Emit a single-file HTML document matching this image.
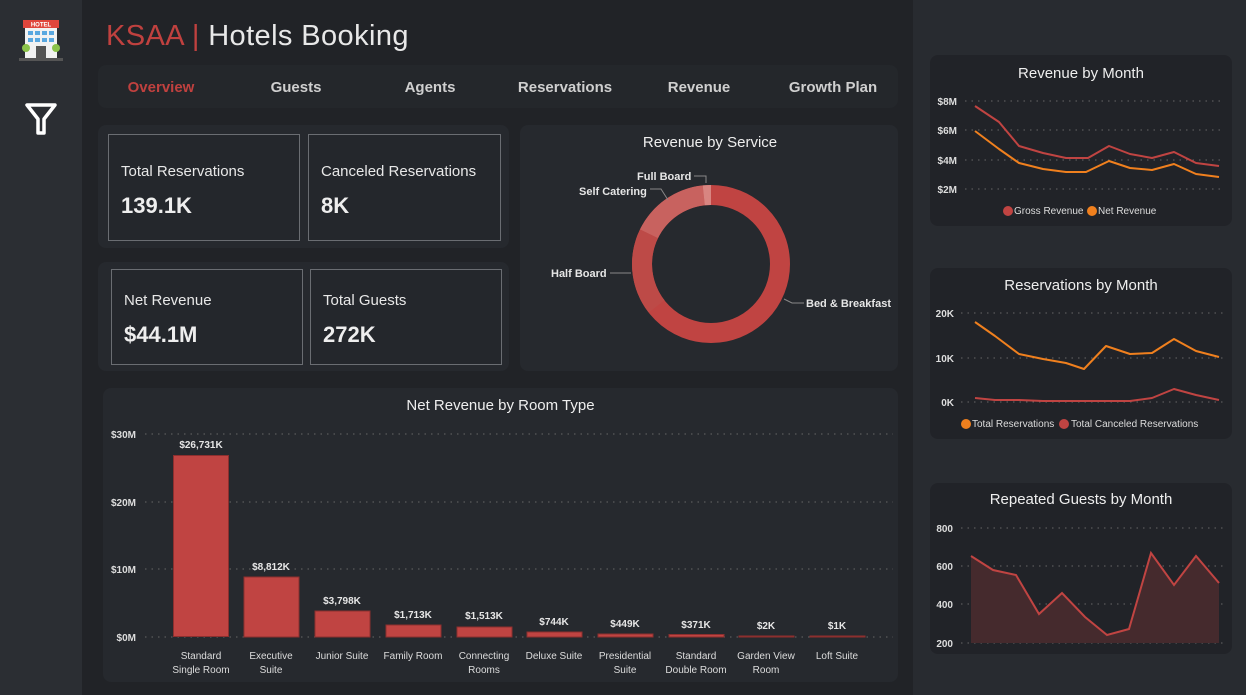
<!DOCTYPE html>
<html><head><meta charset="utf-8"><style>
*{margin:0;padding:0;box-sizing:border-box}
body{width:1246px;height:695px;background:#282b30;font-family:"Liberation Sans","DejaVu Sans",sans-serif;position:relative;overflow:hidden;color:#e6e6e6}
.a{position:absolute}
.card{position:absolute;background:#26292e;border-radius:8px}
.kpi{position:absolute;border:1px solid #6a6d72;background:#24272c}
.kpi .l{position:absolute;left:12px;top:28px;font-size:15px;color:#e8e8e8}
.kpi .v{position:absolute;left:12px;top:58px;font-size:22px;font-weight:bold;color:#eee}
.nav{position:absolute;top:79px;font-size:15px;font-weight:bold;color:#cfcfcf;transform:translateX(-50%)}
.t{position:absolute;font-size:15px;color:#eee;text-align:center}
svg text{font-family:"Liberation Sans",sans-serif}
</style></head><body>
<div class="a" style="left:0;top:0;width:82px;height:695px;background:#2b2e33"></div>
<div class="a" style="left:82px;top:0;width:831px;height:695px;background:#212327"></div>
<svg class="a" style="left:18px;top:18px" width="46" height="46" viewBox="0 0 46 46">
<rect x="5" y="2" width="36" height="8" fill="#e0463c"/><text x="23" y="8.5" font-size="6" fill="#fff" text-anchor="middle" font-weight="bold">HOTEL</text>
<rect x="7" y="10" width="32" height="30" fill="#f2f2f2"/>
<g fill="#5aa8e0"><rect x="10" y="13" width="5" height="4"/><rect x="17" y="13" width="5" height="4"/><rect x="24" y="13" width="5" height="4"/><rect x="31" y="13" width="5" height="4"/><rect x="10" y="20" width="5" height="4"/><rect x="17" y="20" width="5" height="4"/><rect x="24" y="20" width="5" height="4"/><rect x="31" y="20" width="5" height="4"/></g>
<rect x="18" y="28" width="10" height="12" fill="#555"/>
<circle cx="8" cy="30" r="4" fill="#8bc34a"/><circle cx="38" cy="30" r="4" fill="#8bc34a"/>
<rect x="1" y="40" width="44" height="3" fill="#555"/></svg>
<svg class="a" style="left:24px;top:102px" width="34" height="34" viewBox="0 0 34 34"><path d="M3 3 H31 L20 17 V31 H14 V17 Z" fill="none" stroke="#fff" stroke-width="3.5" stroke-linejoin="round"/></svg>
<div class="a" style="left:106px;top:20px;font-size:29px;letter-spacing:0.4px;color:#e8e8e8"><span style="color:#c0413f">KSAA | </span>Hotels Booking</div>
<div class="card" style="left:98px;top:65px;width:800px;height:43px;background:#24272b"></div>
<div class="nav" style="left:161px;color:#c0413f">Overview</div>
<div class="nav" style="left:296px">Guests</div>
<div class="nav" style="left:430px">Agents</div>
<div class="nav" style="left:565px">Reservations</div>
<div class="nav" style="left:699px">Revenue</div>
<div class="nav" style="left:833px">Growth Plan</div>
<div class="card" style="left:98px;top:125px;width:411px;height:123px"></div>
<div class="kpi" style="left:108px;top:134px;width:192px;height:107px"><div class="l">Total Reservations</div><div class="v">139.1K</div></div>
<div class="kpi" style="left:308px;top:134px;width:193px;height:107px"><div class="l">Canceled Reservations</div><div class="v">8K</div></div>
<div class="card" style="left:98px;top:262px;width:411px;height:109px"></div>
<div class="kpi" style="left:111px;top:269px;width:192px;height:96px"><div class="l" style="top:22px">Net Revenue</div><div class="v" style="top:52px">$44.1M</div></div>
<div class="kpi" style="left:310px;top:269px;width:192px;height:96px"><div class="l" style="top:22px">Total Guests</div><div class="v" style="top:52px">272K</div></div>
<div class="card" style="left:520px;top:125px;width:378px;height:246px"></div>
<div class="t" style="left:520px;top:134px;width:380px">Revenue by Service</div>
<svg class="a" style="left:520px;top:125px" width="378" height="246">
<g transform="translate(191,139)">
<circle r="69" fill="none" stroke="#c04442" stroke-width="20"/>
<path d="M-62.3 48.6 A79 79 0 0 1 -71 -34.6 L-53 -25.9 A59 59 0 0 0 -46.5 36.3 Z" fill="#bd4a47"/>
<path d="M-71 -34.6 A79 79 0 0 1 -8.3 -78.6 L-6.2 -58.7 A59 59 0 0 0 -53 -25.9 Z" fill="#c8625f"/>
<path d="M-8.3 -78.6 A79 79 0 0 1 0 -79 L0 -59 A59 59 0 0 0 -6.2 -58.7 Z" fill="#d88581"/>
</g>
<g stroke="#888" fill="none"><path d="M174 51 H186 V58"/><path d="M130 64 H141 L148 75"/><path d="M90 148 H111"/><path d="M264 174 L272 178 H284"/></g>
<g font-size="11" font-weight="bold" fill="#e6e6e6"><text x="117" y="55">Full Board</text><text x="59" y="70">Self Catering</text><text x="31" y="152">Half Board</text><text x="286" y="182">Bed &amp; Breakfast</text></g>
</svg>
<div class="card" style="left:103px;top:388px;width:795px;height:294px"></div>
<div class="t" style="left:103px;top:397px;width:795px">Net Revenue by Room Type</div>
<svg class="a" style="left:103px;top:388px" width="795" height="294">
<g stroke="#666" stroke-dasharray="1.5 5"><path d="M42 46 H790"/><path d="M42 114 H790"/><path d="M42 181 H790"/><path d="M42 249 H790"/></g>
<g font-size="10" font-weight="bold" fill="#ddd" text-anchor="end"><text x="33" y="50">$30M</text><text x="33" y="118">$20M</text><text x="33" y="185">$10M</text><text x="33" y="253">$0M</text></g>
<g fill="#c04442" stroke="#8d2f2e" stroke-width="1">
<rect x="70.5" y="67.5" width="55" height="181"/><rect x="141" y="189" width="55" height="60"/><rect x="212" y="223" width="55" height="26"/><rect x="283" y="237" width="55" height="12"/><rect x="354" y="239" width="55" height="10"/><rect x="424" y="244" width="55" height="5"/><rect x="495" y="246" width="55" height="3"/><rect x="566" y="246.5" width="55" height="2.5"/><rect x="636" y="248" width="55" height="1"/><rect x="707" y="248" width="55" height="1"/></g>
<g font-size="10" font-weight="bold" fill="#e6e6e6" text-anchor="middle">
<text x="98" y="60">$26,731K</text><text x="168" y="182">$8,812K</text><text x="239" y="216">$3,798K</text><text x="310" y="230">$1,713K</text><text x="381" y="231">$1,513K</text><text x="451" y="237">$744K</text><text x="522" y="239">$449K</text><text x="593" y="240">$371K</text><text x="663" y="241">$2K</text><text x="734" y="241">$1K</text></g>
<g font-size="10" fill="#ddd" text-anchor="middle">
<text x="98" y="271">Standard</text><text x="98" y="285">Single Room</text><text x="168" y="271">Executive</text><text x="168" y="285">Suite</text><text x="239" y="271">Junior Suite</text><text x="310" y="271">Family Room</text><text x="381" y="271">Connecting</text><text x="381" y="285">Rooms</text><text x="451" y="271">Deluxe Suite</text><text x="522" y="271">Presidential</text><text x="522" y="285">Suite</text><text x="593" y="271">Standard</text><text x="593" y="285">Double Room</text><text x="663" y="271">Garden View</text><text x="663" y="285">Room</text><text x="734" y="271">Loft Suite</text></g>
</svg>
<div class="card" style="left:930px;top:55px;width:302px;height:171px;background:#212328"></div>
<div class="t" style="left:930px;top:65px;width:302px">Revenue by Month</div>
<div class="card" style="left:930px;top:268px;width:302px;height:171px;background:#212328"></div>
<div class="t" style="left:930px;top:277px;width:302px">Reservations by Month</div>
<div class="card" style="left:930px;top:483px;width:302px;height:171px;background:#212328"></div>
<div class="t" style="left:930px;top:491px;width:302px">Repeated Guests by Month</div>
<svg class="a" style="left:0;top:0" width="1246" height="695">
<g stroke="#666" stroke-dasharray="1.5 5"><path d="M965 101 H1225"/><path d="M965 130 H1225"/><path d="M965 160 H1225"/><path d="M965 189 H1225"/>
<path d="M961 313 H1225"/><path d="M961 358 H1225"/><path d="M961 402 H1225"/>
<path d="M961 528 H1225"/><path d="M961 566 H1225"/><path d="M961 604 H1225"/><path d="M961 643 H1225"/></g>
<g font-size="10" font-weight="bold" fill="#ddd" text-anchor="end"><text x="957" y="105">$8M</text><text x="957" y="134">$6M</text><text x="957" y="164">$4M</text><text x="957" y="193">$2M</text>
<text x="954" y="317">20K</text><text x="954" y="362">10K</text><text x="954" y="406">0K</text>
<text x="953" y="532">800</text><text x="953" y="570">600</text><text x="953" y="608">400</text><text x="953" y="647">200</text></g>
<g fill="none" stroke-width="2" stroke-linejoin="round">
<polyline stroke="#c04442" points="975,106 999,122 1019,146 1043,153 1066,158 1088,158 1109,146 1130,154 1152,158 1174,152 1196,163 1219,166"/>
<polyline stroke="#f0801e" points="975,131 999,149 1019,163 1043,169 1066,172 1086,172 1109,161 1130,168 1152,170 1174,164 1196,174 1219,177"/>
<polyline stroke="#f0801e" points="975,322 995,336 1019,354 1043,359 1066,363 1084,369 1106,346 1130,354 1152,353 1174,339 1196,351 1219,357"/>
<polyline stroke="#c04442" points="975,398 995,400 1019,400 1043,401 1066,401 1088,401 1109,401 1130,401 1152,398 1174,389 1196,395 1219,400"/></g>
<polygon fill="#452a2d" points="971,556 993,570 1016,575 1039,614 1062,593 1085,617 1107,635 1129,629 1151,553 1174,585 1196,556 1219,583 1219,643 971,643"/>
<polyline fill="none" stroke="#c04442" stroke-width="2" points="971,556 993,570 1016,575 1039,614 1062,593 1085,617 1107,635 1129,629 1151,553 1174,585 1196,556 1219,583"/>
<g font-size="10" fill="#ddd"><circle cx="1008" cy="211" r="5" fill="#c04442"/><text x="1014" y="214">Gross Revenue</text><circle cx="1092" cy="211" r="5" fill="#f0801e"/><text x="1098" y="214">Net Revenue</text>
<circle cx="966" cy="424" r="5" fill="#f0801e"/><text x="972" y="427">Total Reservations</text><circle cx="1064" cy="424" r="5" fill="#c04442"/><text x="1071" y="427">Total Canceled Reservations</text></g>
</svg>
</body></html>
